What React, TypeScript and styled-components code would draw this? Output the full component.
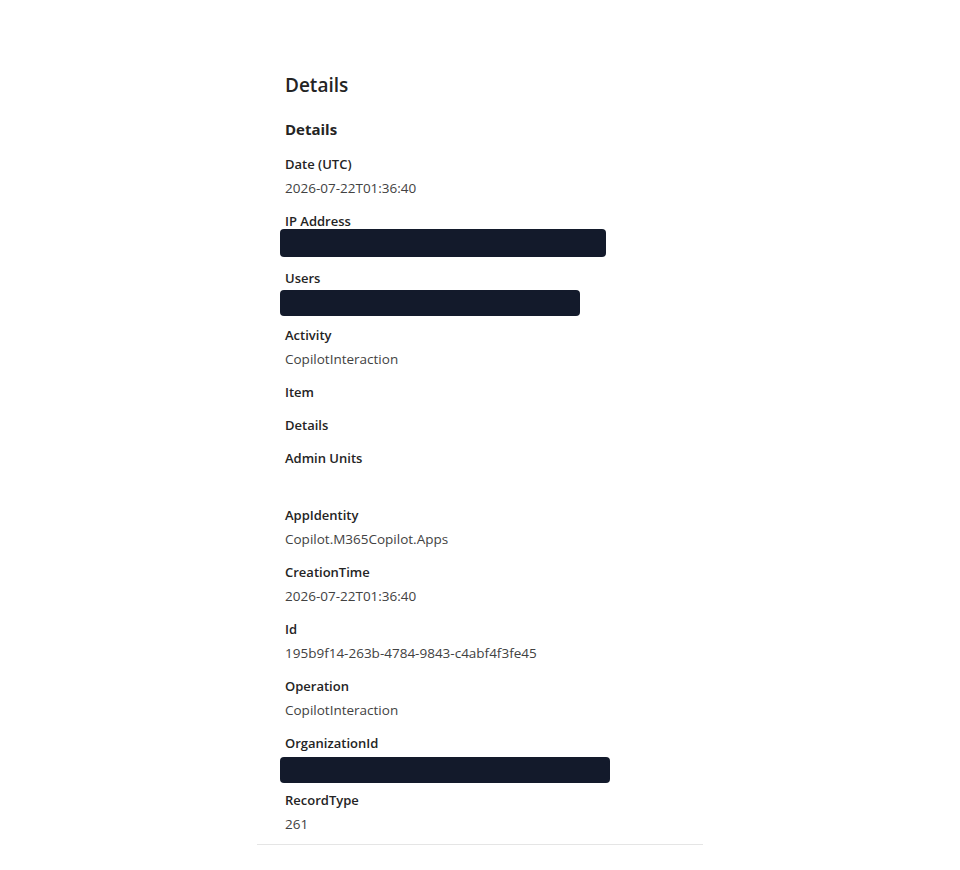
import styled, { createGlobalStyle } from "styled-components";

const GlobalStyle = createGlobalStyle`
  html, body {
    margin: 0;
    padding: 0;
    background: #ffffff;
  }
  body {
    font-family: "Segoe UI", "Open Sans", "Noto Sans", sans-serif;
    -webkit-font-smoothing: antialiased;
  }
`;

const Page = styled.div`
  display: flex;
  justify-content: center;
  padding-top: 71px;
`;

const Panel = styled.section`
  width: 446px;
  border-bottom: 1px solid #e5e5e5;
  padding: 0 28px 10px;
  box-sizing: border-box;
`;

const Title = styled.h1`
  margin: 0 0 19px;
  font-size: 19px;
  line-height: 28px;
  font-weight: 600;
  color: #242424;
`;

const SectionTitle = styled.h2`
  margin: 0 0 14px;
  font-size: 15px;
  line-height: 22px;
  font-weight: 700;
  color: #242424;
`;

const Field = styled.div`
  margin-bottom: 13px;
  &:last-child {
    margin-bottom: 0;
  }
`;

const Label = styled.div`
  font-size: 13px;
  line-height: 20px;
  font-weight: 600;
  color: #242424;
`;

const Value = styled.div`
  position: relative;
  margin-top: 4px;
  min-height: 20px;
  font-size: 13.5px;
  line-height: 20px;
  color: #424242;
`;

const Redacted = styled.span<{ $width: number; $top: number; $height: number }>`
  position: absolute;
  left: -5px;
  top: ${(p) => p.$top}px;
  width: ${(p) => p.$width}px;
  height: ${(p) => p.$height}px;
  background: #131a2b;
  border-radius: 4px;
`;

type Row = {
  label: string;
  value?: string;
  empty?: boolean;
  redact?: { width: number; top: number; height: number };
};

const rows: Row[] = [
  { label: "Date (UTC)", value: "2026-07-22T01:36:40" },
  { label: "IP Address", redact: { width: 326, top: -6, height: 28 } },
  { label: "Users", redact: { width: 300, top: -2, height: 26 } },
  { label: "Activity", value: "CopilotInteraction" },
  { label: "Item" },
  { label: "Details" },
  { label: "Admin Units", empty: true },
  { label: "AppIdentity", value: "Copilot.M365Copilot.Apps" },
  { label: "CreationTime", value: "2026-07-22T01:36:40" },
  { label: "Id", value: "195b9f14-263b-4784-9843-c4abf4f3fe45" },
  { label: "Operation", value: "CopilotInteraction" },
  { label: "OrganizationId", redact: { width: 330, top: 0, height: 26 } },
  { label: "RecordType", value: "261" },
];

export default function App() {
  return (
    <>
      <GlobalStyle />
      <Page>
        <Panel>
          <Title>Details</Title>
          <SectionTitle>Details</SectionTitle>
          {rows.map((row, i) => (
            <Field key={i}>
              <Label>{row.label}</Label>
              {(row.value !== undefined || row.empty || row.redact) && (
                <Value>
                  {row.value}
                  {row.redact && (
                    <Redacted
                      $width={row.redact.width}
                      $top={row.redact.top}
                      $height={row.redact.height}
                    />
                  )}
                </Value>
              )}
            </Field>
          ))}
        </Panel>
      </Page>
    </>
  );
}
